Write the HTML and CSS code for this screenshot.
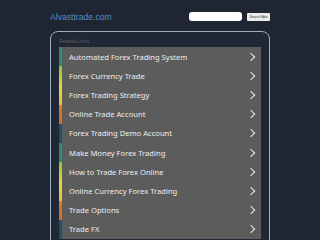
FILE: index.html
```html
<!DOCTYPE html>
<html lang="en">
<head>
    <meta charset="UTF-8">
    <meta name="viewport" content="width=device-width, initial-scale=1.0">
    <title>Alvasttrade.com</title>
    <link rel="stylesheet" href="styles.css">
</head>
<body>

    <div class="wrap">

        <!-- header -->
        <header>
            <div class="logo">Alvasttrade.com</div>
            <div class="searchBox">
                <input type="text" class="searchInput"><button class="searchBtn">Search Ads</button>
            </div>
        </header>

        <!-- related links -->
        <div class="panel">
            <div class="panelTitle">Related Links</div>
            <div class="linkList">
                <a class="linkItem c1" href="#"><span class="linkText">Automated Forex Trading System</span><span class="chev"></span></a>
                <a class="linkItem c2" href="#"><span class="linkText">Forex Currency Trade</span><span class="chev"></span></a>
                <a class="linkItem c3" href="#"><span class="linkText">Forex Trading Strategy</span><span class="chev"></span></a>
                <a class="linkItem c4" href="#"><span class="linkText">Online Trade Account</span><span class="chev"></span></a>
                <a class="linkItem c5" href="#"><span class="linkText">Forex Trading Demo Account</span><span class="chev"></span></a>
                <a class="linkItem c1" href="#"><span class="linkText">Make Money Forex Trading</span><span class="chev"></span></a>
                <a class="linkItem c2" href="#"><span class="linkText">How to Trade Forex Online</span><span class="chev"></span></a>
                <a class="linkItem c3" href="#"><span class="linkText">Online Currency Forex Trading</span><span class="chev"></span></a>
                <a class="linkItem c4" href="#"><span class="linkText">Trade Options</span><span class="chev"></span></a>
                <a class="linkItem c5" href="#"><span class="linkText">Trade FX</span><span class="chev"></span></a>
            </div>
        </div>

    </div>

</body>
</html>
```

FILE: styles.css
```css
body{
    margin: 0;
    background-color: #1f2531;
    font-family: "Liberation Sans", Arial, sans-serif;
    overflow: hidden;
}

.wrap{
    width: 220px;
    margin: 0 auto;
    height: 240px;
    overflow: hidden;
}

header{
    display: flex;
    justify-content: space-between;
    align-items: center;
    height: 31px;
}

.logo{
    color: #4f8fc6;
    font-size: 8.6px;
    padding-top: 3px;
}

.searchBox{
    display: flex;
    align-items: center;
    padding-top: 2px;
}

.searchInput{
    width: 53px;
    height: 9px;
    box-sizing: border-box;
    border: none;
    border-radius: 3px;
    background: #fff;
    padding: 0;
    margin: 0 5px 0 0;
}

.searchBtn{
    width: 23px;
    height: 8px;
    box-sizing: border-box;
    border: none;
    border-radius: 1px;
    background: #ececec;
    color: #333;
    font-family: "Liberation Sans", Arial, sans-serif;
    font-size: 3.5px;
    padding: 0;
}

.panel{
    border: 1px solid #9db0c4;
    border-radius: 8px;
    background-color: #202735;
    padding: 5px 8px 0 8px;
    height: 230px;
}

.panelTitle{
    color: #56606c;
    font-size: 5px;
    height: 10px;
    line-height: 9px;
}

.linkList{
    background-color: #5c5c5c;
}

.linkItem{
    display: flex;
    align-items: center;
    height: 19.2px;
    padding: 0 6px 0 7px;
    border-left: 3px solid #2e8b6e;
    box-sizing: border-box;
    text-decoration: none;
    color: #eeeeee;
    font-family: "Noto Sans", "Open Sans", sans-serif;
    font-size: 7.6px;
}

.linkText{
    flex: 1;
}

.c1{ border-image: linear-gradient(#2e8b6e, #2e8b6e) 1; }
.c2{ border-image: linear-gradient(#8fc040, #dcd83c) 1; }
.c3{ border-image: linear-gradient(#e2da3a, #e8c23a) 1; }
.c4{ border-image: linear-gradient(#e07a26, #d86a22) 1; }
.c5{ border-image: linear-gradient(#1d5360, #1d5360) 1; }

.chev{
    width: 5px;
    height: 5px;
    border-top: 1.2px solid #e8e8e8;
    border-right: 1.2px solid #e8e8e8;
    transform: rotate(45deg);
    margin-right: 1px;
}
```
